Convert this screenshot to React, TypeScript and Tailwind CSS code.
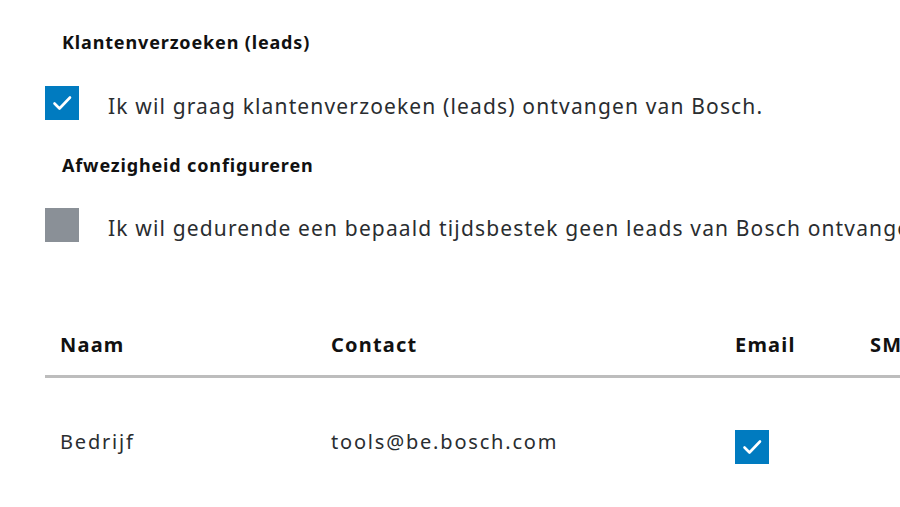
import React from "react";

function Box({ checked }: { checked: boolean }) {
  return (
    <div
      className={
        checked
          ? "w-[34px] h-[34px] shrink-0 bg-[#007bc0] flex items-center justify-center"
          : "w-[34px] h-[34px] shrink-0 bg-[#8a9097]"
      }
    >
      {checked && (
        <svg width="34" height="34" viewBox="0 0 34 34" fill="none">
          <path
            d="M9.5 17.5 L14.5 22.5 L25 11.5"
            stroke="#ffffff"
            strokeWidth="2.6"
            strokeLinecap="round"
            strokeLinejoin="round"
          />
        </svg>
      )}
    </div>
  );
}

export default function App() {
  return (
    <div className="w-[900px] h-[507px] overflow-hidden bg-white font-['Noto_Sans',sans-serif] text-[#2a2d30]">
      <div className="w-[1200px] pl-[45px] pt-[30px] whitespace-nowrap">
        {/* Leads */}
        <h3 className="pl-[17px] text-[18px] leading-[24px] font-bold tracking-[0.85px] text-[#111]">
          Klantenverzoeken (leads)
        </h3>
        <div className="mt-[32px] flex items-center gap-[29px]">
          <Box checked />
          <span className="pt-[6px] text-[21px] leading-[28px] tracking-[1.15px]">
            Ik wil graag klantenverzoeken (leads) ontvangen van Bosch.
          </span>
        </div>

        {/* Absence */}
        <h3 className="mt-[33px] pl-[17px] text-[18px] leading-[24px] font-bold tracking-[0.85px] text-[#111]">
          Afwezigheid configureren
        </h3>
        <div className="mt-[31px] flex items-center gap-[29px]">
          <Box checked={false} />
          <span className="pt-[6px] text-[21px] leading-[28px] tracking-[1.15px]">
            Ik wil gedurende een bepaald tijdsbestek geen leads van Bosch ontvangen.
          </span>
        </div>

        {/* Contacts table */}
        <div className="mt-[74px]">
          <div className="grid grid-cols-[271px_404px_135px_1fr] border-b-[3px] border-[#bdbdbd] pt-[15px] pb-[16px] text-[20px] leading-[28px] font-bold text-[#111] tracking-[1.2px]">
            <div className="px-[15px]">Naam</div>
            <div className="px-[15px]">Contact</div>
            <div className="px-[15px]">Email</div>
            <div className="px-[15px]">SMS</div>
          </div>
          <div className="grid grid-cols-[271px_404px_135px_1fr] items-start pt-[52px] text-[20px] leading-[26px] tracking-[1.8px]">
            <div className="-mt-px px-[15px]">Bedrijf</div>
            <div className="-mt-px px-[15px]">tools@be.bosch.com</div>
            <div className="px-[15px]">
              <Box checked />
            </div>
            <div className="px-[15px]" />
          </div>
        </div>
      </div>
    </div>
  );
}
